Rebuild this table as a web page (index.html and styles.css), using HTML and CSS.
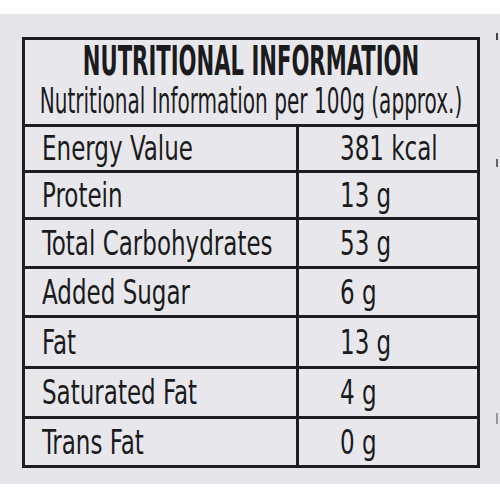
FILE: index.html
```html
<!DOCTYPE html>
<html>
<head>
<meta charset="utf-8">
<link rel="stylesheet" href="styles.css">
</head>
<body>
<div class="sheet">
  <div class="label">
    <div class="head">
      <div class="title"><span class="tall tall-title">NUTRITIONAL INFORMATION</span></div>
      <div class="subtitle"><span class="tall tall-sub">Nutritional Information per 100g (approx.)</span></div>
    </div>
    <div class="table">
      <div class="cell name r1"><span class="tall">Energy Value</span></div>
      <div class="cell val r1"><span class="tall">381 kcal</span></div>
      <div class="cell name r2"><span class="tall">Protein</span></div>
      <div class="cell val r2"><span class="tall">13 g</span></div>
      <div class="cell name r3"><span class="tall">Total Carbohydrates</span></div>
      <div class="cell val r3"><span class="tall">53 g</span></div>
      <div class="cell name r4"><span class="tall">Added Sugar</span></div>
      <div class="cell val r4"><span class="tall">6 g</span></div>
      <div class="cell name r5"><span class="tall">Fat</span></div>
      <div class="cell val r5"><span class="tall">13 g</span></div>
      <div class="cell name r6"><span class="tall">Saturated Fat</span></div>
      <div class="cell val r6"><span class="tall">4 g</span></div>
      <div class="cell name r7 last"><span class="tall">Trans Fat</span></div>
      <div class="cell val r7 last"><span class="tall">0 g</span></div>
    </div>
  </div>
  <div class="edge">
    <i class="tick t1"></i>
    <i class="tick t2"></i>
    <i class="tick t3"></i>
  </div>
</div>
</body>
</html>
```

FILE: styles.css
```css
html, body {
  margin: 0;
  padding: 0;
  background: #ffffff;
}

body {
  width: 500px;
  height: 500px;
  overflow: hidden;
  font-family: "DejaVu Sans Condensed", "DejaVu Sans", sans-serif;
  color: #1b1b1d;
}

.sheet {
  margin-top: 14px;
  height: 470px;
  background: #e6e6ea;
  display: flex;
  padding: 23px 0 0 22px;
  box-sizing: border-box;
}

.label {
  width: 458px;
  height: 431px;
  border: 3px solid #1e1e20;
  box-sizing: border-box;
  background: #e8e8ec;
}

.head {
  height: 87px;
  padding-top: 9px;
  border-bottom: 3px solid #1e1e20;
  box-sizing: border-box;
  display: flex;
  flex-direction: column;
  align-items: center;
}

/* the label's typeface is a tall condensed face: stretch glyphs vertically */
.tall {
  display: inline-block;
  white-space: nowrap;
  transform: scaleY(1.3);
  transform-origin: center center;
}

.title {
  font-weight: bold;
  font-size: 23.5px;
  line-height: 24px;
  height: 24px;
}

.tall-title {
  transform: scaleY(1.7);
}

.subtitle {
  font-size: 22.3px;
  line-height: 22px;
  height: 22px;
  margin-top: 16px;
}

.tall-sub {
  transform: scaleY(1.6);
}

.table {
  display: grid;
  grid-template-columns: 274px 1fr;
  grid-template-rows: 46px 47px 49px 49px 51px 50px 46px;
}

.cell {
  font-size: 25.6px;
  line-height: 25px;
  display: flex;
  align-items: center;
  border-bottom: 3px solid #1e1e20;
}

.cell.last {
  border-bottom: none;
}

.name {
  padding-left: 17px;
  border-right: 3px solid #1e1e20;
}

.val {
  padding-left: 41px;
}

.edge {
  flex: 1;
  display: flex;
  flex-direction: column;
  align-items: flex-end;
  padding-right: 2px;
}

.tick {
  display: block;
  width: 2px;
  background: #444;
}

.t1 { height: 7px; margin-top: -4px; }
.t2 { height: 8px; margin-top: 119px; background: #666; }
.t3 { height: 11px; margin-top: 246px; background: #999; }
```
